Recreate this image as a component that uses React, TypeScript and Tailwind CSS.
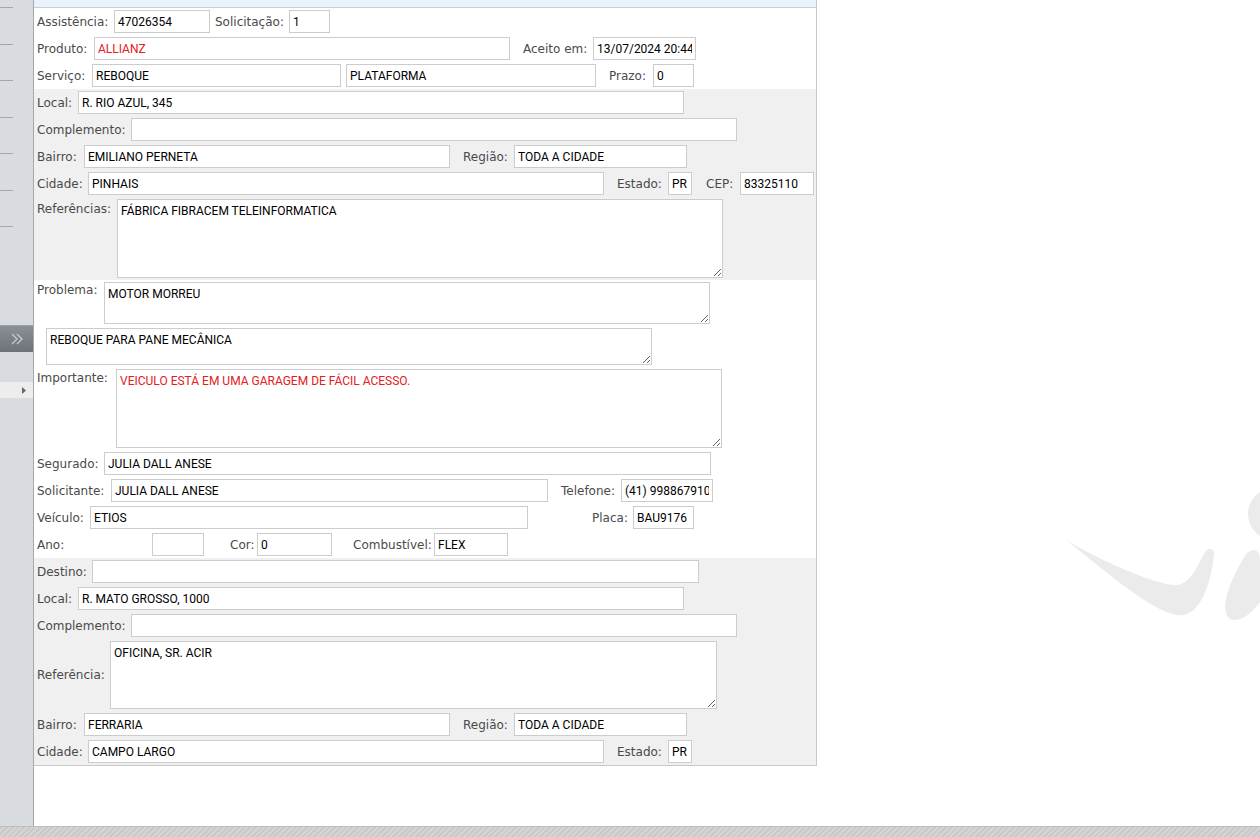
import React from 'react';

const lbl = "shrink-0 whitespace-nowrap font-['DejaVu_Sans',sans-serif] text-[12px] leading-[16px] text-[#4a4a4a]";
const box = "shrink-0 border border-[#cccccc] bg-white px-[3px] font-['Roboto',sans-serif] text-[12px] outline-none";

function Lbl({ c, children }: { c: string; children?: React.ReactNode }) {
  return <span className={`${lbl} ${c}`}>{children}</span>;
}

function Inp({ c, v = '', red }: { c: string; v?: string; red?: boolean }) {
  return (
    <input
      readOnly
      defaultValue={v}
      className={`${box} h-[23px] ${red ? 'text-[#e3201b]' : 'text-black'} ${c}`}
    />
  );
}

function Area({ c, v = '', red }: { c: string; v?: string; red?: boolean }) {
  return (
    <textarea
      readOnly
      defaultValue={v}
      className={`${box} resize pt-[3px] leading-[16px] ${red ? 'text-[#e3201b]' : 'text-black'} ${c}`}
    />
  );
}

function Row({ children, top }: { children: React.ReactNode; top?: boolean }) {
  return <div className={`flex py-[2px] ${top ? 'items-start' : 'items-center'}`}>{children}</div>;
}

function Sidebar() {
  return (
    <div className="flex w-[34px] shrink-0 flex-col border-r border-[#a8a8a8] bg-[#d8dbdf]">
      <div className="h-[8px] shrink-0">
        <div className="h-full w-[13px] border-b border-[#a3a8ad]" />
      </div>
      {[0, 1, 2, 3, 4, 5].map((i) => (
        <div key={i} className="h-[36.5px] shrink-0">
          <div className="h-full w-[13px] border-b border-[#a3a8ad]" />
        </div>
      ))}
      <div className="mt-[98px] flex h-[27px] shrink-0 items-center justify-center border-t border-[#9aa0a5] bg-gradient-to-b from-[#8a9096] to-[#6c7278]">
        <svg width="16" height="14" viewBox="0 0 16 14" fill="none" stroke="#c3c8cc" strokeWidth="1.4">
          <path d="M3 2l5 5-5 5" />
          <path d="M8 2l5 5-5 5" />
        </svg>
      </div>
      <div className="mt-[30px] flex h-[16px] shrink-0 items-center justify-end bg-[#ededed] pr-[6px]">
        <svg width="5" height="7" viewBox="0 0 5 7">
          <path d="M0 0l4 3.5L0 7z" fill="#666" />
        </svg>
      </div>
    </div>
  );
}

function Watermark() {
  return (
    <svg className="absolute right-0 top-[470px]" width="220" height="170" viewBox="0 0 220 170">
      <path
        d="M26 70 C60 96 108 140 137 145 C160 149 172 112 174 82 C171 76 166 79 163 86 C154 104 146 117 132 115 C104 110 60 90 26 70 Z"
        fill="#ebebeb"
      />
      <path d="M190 149 C178 140 190 110 206 84 C213 77 220 79 220 90 L220 132 C212 143 200 153 190 149 Z" fill="#ebebeb" />
      <circle cx="234" cy="44" r="26" fill="#ebebeb" />
    </svg>
  );
}

export default function App() {
  return (
    <div className="flex h-[837px] w-[1260px] flex-col overflow-hidden bg-white">
      <div className="flex min-h-0 flex-1">
        <Sidebar />
        <div className="relative flex-1 bg-white">
          <Watermark />
          <div className="relative w-[783px] border-r border-b border-[#c8c8c8]">
            <div className="h-[8px] border-b border-[#c6ced6] bg-[#eaf2fb]" />

            <div className="bg-white pl-[3px]">
              <Row>
                <Lbl c="w-[77px]">Assistência:</Lbl>
                <Inp c="w-[96px]" v="47026354" />
                <Lbl c="w-[79px] pl-[5px]">Solicitação:</Lbl>
                <Inp c="w-[41px]" v="1" />
              </Row>
              <Row>
                <Lbl c="w-[57px]">Produto:</Lbl>
                <Inp c="w-[416px]" v="ALLIANZ" red />
                <Lbl c="w-[83px] pl-[13px]">Aceito em:</Lbl>
                <Inp c="w-[103px]" v="13/07/2024 20:44" />
              </Row>
              <Row>
                <Lbl c="w-[55px]">Serviço:</Lbl>
                <Inp c="w-[249px]" v="REBOQUE" />
                <Inp c="ml-[5px] w-[250px]" v="PLATAFORMA" />
                <Lbl c="w-[57px] pl-[13px]">Prazo:</Lbl>
                <Inp c="w-[41px]" v="0" />
              </Row>
            </div>

            <div className="bg-[#f0f0f0] pl-[3px]">
              <Row>
                <Lbl c="w-[41px]">Local:</Lbl>
                <Inp c="w-[606px]" v="R. RIO AZUL, 345" />
              </Row>
              <Row>
                <Lbl c="w-[94px]">Complemento:</Lbl>
                <Inp c="w-[606px]" />
              </Row>
              <Row>
                <Lbl c="w-[47px]">Bairro:</Lbl>
                <Inp c="w-[366px]" v="EMILIANO PERNETA" />
                <Lbl c="w-[64px] pl-[13px]">Região:</Lbl>
                <Inp c="w-[173px]" v="TODA A CIDADE" />
              </Row>
              <Row>
                <Lbl c="w-[51px]">Cidade:</Lbl>
                <Inp c="w-[516px]" v="PINHAIS" />
                <Lbl c="w-[64px] pl-[13px]">Estado:</Lbl>
                <Inp c="w-[24px]" v="PR" />
                <Lbl c="w-[48px] pl-[14px]">CEP:</Lbl>
                <Inp c="w-[74px]" v="83325110" />
              </Row>
              <Row top>
                <Lbl c="w-[80px] mt-[2px]">Referências:</Lbl>
                <Area c="h-[79px] w-[606px]" v="FÁBRICA FIBRACEM TELEINFORMATICA" />
              </Row>
            </div>

            <div className="bg-white pl-[3px]">
              <Row top>
                <Lbl c="w-[67px]">Problema:</Lbl>
                <Area c="h-[42px] w-[606px]" v="MOTOR MORREU" />
              </Row>
              <Row>
                <Area c="ml-[9px] h-[37px] w-[606px]" v="REBOQUE PARA PANE MECÂNICA" />
              </Row>
              <Row top>
                <Lbl c="w-[79px] mt-[1px]">Importante:</Lbl>
                <Area c="h-[79px] w-[606px]" v="VEICULO ESTÁ EM UMA GARAGEM DE FÁCIL ACESSO." red />
              </Row>
              <Row>
                <Lbl c="w-[67px]">Segurado:</Lbl>
                <Inp c="w-[607px]" v="JULIA DALL ANESE" />
              </Row>
              <Row>
                <Lbl c="w-[74px]">Solicitante:</Lbl>
                <Inp c="w-[437px]" v="JULIA DALL ANESE" />
                <Lbl c="w-[73px] pl-[13px]">Telefone:</Lbl>
                <Inp c="w-[92px]" v="(41) 998867910" />
              </Row>
              <Row>
                <Lbl c="w-[53px]">Veículo:</Lbl>
                <Inp c="w-[438px]" v="ETIOS" />
                <Lbl c="w-[105px] pl-[64px]">Placa:</Lbl>
                <Inp c="w-[61px]" v="BAU9176" />
              </Row>
              <Row>
                <Lbl c="w-[115px]">Ano:</Lbl>
                <Inp c="w-[52px]" />
                <Lbl c="w-[53px] pl-[26px]">Cor:</Lbl>
                <Inp c="w-[75px]" v="0" />
                <Lbl c="w-[102px] pl-[21px]">Combustível:</Lbl>
                <Inp c="w-[74px]" v="FLEX" />
              </Row>
            </div>

            <div className="bg-[#f0f0f0] pl-[3px]">
              <Row>
                <Lbl c="w-[55px]">Destino:</Lbl>
                <Inp c="w-[607px]" />
              </Row>
              <Row>
                <Lbl c="w-[41px]">Local:</Lbl>
                <Inp c="w-[606px]" v="R. MATO GROSSO, 1000" />
              </Row>
              <Row>
                <Lbl c="w-[94px]">Complemento:</Lbl>
                <Inp c="w-[606px]" />
              </Row>
              <Row>
                <Lbl c="w-[73px]">Referência:</Lbl>
                <Area c="h-[68px] w-[607px]" v="OFICINA, SR. ACIR" />
              </Row>
              <Row>
                <Lbl c="w-[47px]">Bairro:</Lbl>
                <Inp c="w-[366px]" v="FERRARIA" />
                <Lbl c="w-[64px] pl-[13px]">Região:</Lbl>
                <Inp c="w-[173px]" v="TODA A CIDADE" />
              </Row>
              <Row>
                <Lbl c="w-[51px]">Cidade:</Lbl>
                <Inp c="w-[516px]" v="CAMPO LARGO" />
                <Lbl c="w-[64px] pl-[13px]">Estado:</Lbl>
                <Inp c="w-[24px]" v="PR" />
              </Row>
            </div>
          </div>
        </div>
      </div>
      <div className="h-[11px] shrink-0 border-t border-[#bdbdbd] bg-[repeating-linear-gradient(-45deg,#c9c9c9_0px,#c9c9c9_2px,#d5d5d5_2px,#d5d5d5_4px)]" />
    </div>
  );
}
